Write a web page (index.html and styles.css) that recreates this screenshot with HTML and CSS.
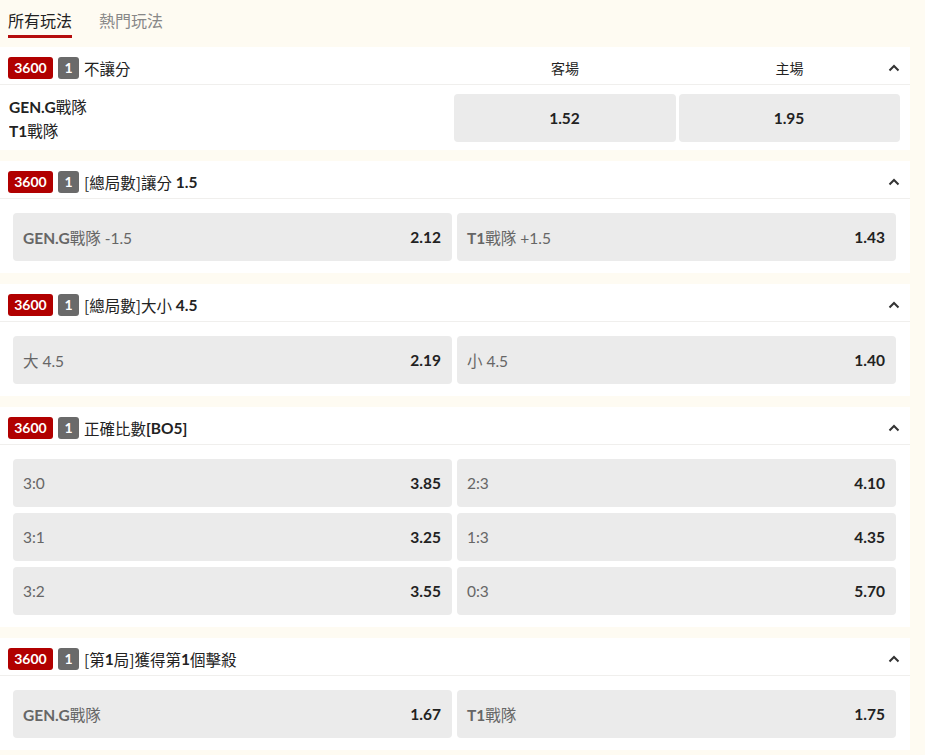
FILE: index.html
```html
<!DOCTYPE html>
<html lang="zh-Hant">
<head>
<meta charset="utf-8">
<title>玩法</title>
<link rel="stylesheet" href="styles.css">
</head>
<body>
<div class="page">
  <nav class="tabs">
    <span class="tab active">所有玩法</span>
    <span class="tab">熱門玩法</span>
  </nav>

  <section class="card">
    <header class="head head-cols">
      <div class="title"><span class="badge red">3600</span><span class="badge gray">1</span><span class="cj">不讓分</span></div>
      <div class="col-label away">客場</div>
      <div class="col-label home">主場</div>
      <svg class="chev chev-cols" width="12" height="8" viewBox="0 0 12 8"><path d="M1.5 6.5 L6 2 L10.5 6.5" fill="none" stroke="#333" stroke-width="2"/></svg>
    </header>
    <div class="body body-cols">
      <div class="teams">
        <div class="team">GEN.G<span class="cj">戰隊</span></div>
        <div class="team">T1<span class="cj">戰隊</span></div>
      </div>
      <button class="odd center"><b>1.52</b></button>
      <button class="odd center"><b>1.95</b></button>
    </div>
  </section>

  <section class="card">
    <header class="head">
      <div class="title"><span class="badge red">3600</span><span class="badge gray">1</span><span class="cj">[總局數]讓分</span>&nbsp;1.5</div>
      <svg class="chev" width="12" height="8" viewBox="0 0 12 8"><path d="M1.5 6.5 L6 2 L10.5 6.5" fill="none" stroke="#333" stroke-width="2"/></svg>
    </header>
    <div class="body grid2">
      <button class="odd"><span class="lbl"><b>GEN.G</b>戰隊 -1.5</span><b>2.12</b></button>
      <button class="odd"><span class="lbl"><b>T1</b>戰隊 +1.5</span><b>1.43</b></button>
    </div>
  </section>

  <section class="card">
    <header class="head">
      <div class="title"><span class="badge red">3600</span><span class="badge gray">1</span><span class="cj">[總局數]大小</span>&nbsp;4.5</div>
      <svg class="chev" width="12" height="8" viewBox="0 0 12 8"><path d="M1.5 6.5 L6 2 L10.5 6.5" fill="none" stroke="#333" stroke-width="2"/></svg>
    </header>
    <div class="body grid2">
      <button class="odd"><span class="lbl">大 4.5</span><b>2.19</b></button>
      <button class="odd"><span class="lbl">小 4.5</span><b>1.40</b></button>
    </div>
  </section>

  <section class="card">
    <header class="head">
      <div class="title"><span class="badge red">3600</span><span class="badge gray">1</span><span class="cj">正確比數</span>[BO5]</div>
      <svg class="chev" width="12" height="8" viewBox="0 0 12 8"><path d="M1.5 6.5 L6 2 L10.5 6.5" fill="none" stroke="#333" stroke-width="2"/></svg>
    </header>
    <div class="body grid2">
      <button class="odd"><span class="lbl">3:0</span><b>3.85</b></button>
      <button class="odd"><span class="lbl">2:3</span><b>4.10</b></button>
      <button class="odd"><span class="lbl">3:1</span><b>3.25</b></button>
      <button class="odd"><span class="lbl">1:3</span><b>4.35</b></button>
      <button class="odd"><span class="lbl">3:2</span><b>3.55</b></button>
      <button class="odd"><span class="lbl">0:3</span><b>5.70</b></button>
    </div>
  </section>

  <section class="card">
    <header class="head">
      <div class="title"><span class="badge red">3600</span><span class="badge gray">1</span><span class="cj">[第</span>1<span class="cj">局]獲得第</span>1<span class="cj">個擊殺</span></div>
      <svg class="chev" width="12" height="8" viewBox="0 0 12 8"><path d="M1.5 6.5 L6 2 L10.5 6.5" fill="none" stroke="#333" stroke-width="2"/></svg>
    </header>
    <div class="body grid2">
      <button class="odd"><span class="lbl"><b>GEN.G</b>戰隊</span><b>1.67</b></button>
      <button class="odd"><span class="lbl"><b>T1</b>戰隊</span><b>1.75</b></button>
    </div>
  </section>
</div>
</body>
</html>
```
FILE: styles.css
```css
* { box-sizing: border-box; }
html, body {
  margin: 0;
  padding: 0;
  background: #fefbf2;
}
body {
  font-family: Lato, "Noto Sans CJK TC", sans-serif;
  color: #222;
}
.page {
  width: 910px;
}
.tabs {
  display: flex;
  gap: 27px;
  height: 47px;
  padding: 10px 8px 0;
}
.tab {
  font-family: "Noto Sans CJK TC", sans-serif;
  font-size: 16px;
  line-height: 20px;
  height: 28px;
  padding: 0 0 5px;
  color: #888;
  border-bottom: 3px solid transparent;
}
.tab.active {
  color: #222;
  border-bottom-color: #b50c0c;
}
.card {
  background: #fff;
  margin-bottom: 11px;
}
.head {
  display: flex;
  align-items: center;
  height: 38px;
  padding: 10px 10px 5px 8px;
  border-bottom: 1px solid #f0efed;
}
.head-cols {
  display: grid;
  grid-template-columns: 1fr 222px 221px;
  column-gap: 3px;
  padding-left: 8px;
}
.head-cols .title { grid-row: 1; grid-column: 1; }
.head-cols .away { grid-row: 1; grid-column: 2; }
.head-cols .home { grid-row: 1; grid-column: 3; }
.title {
  display: flex;
  align-items: center;
  height: 22px;
  font-size: 15.5px;
  font-weight: 700;
  line-height: 22px;
  white-space: pre;
}
.cj {
  font-family: "Noto Sans CJK TC", sans-serif;
  font-weight: 400;
}
.badge {
  display: inline-flex;
  align-items: center;
  justify-content: center;
  height: 22px;
  border-radius: 3px;
  color: #fff;
  font-size: 14px;
  font-weight: 700;
  margin-right: 5px;
}
.badge.red {
  background: #b10000;
  width: 45px;
}
.badge.gray {
  background: #6a6a6a;
  width: 21px;
}
.col-label {
  text-align: center;
  font-family: "Noto Sans CJK TC", sans-serif;
  font-size: 14px;
  line-height: 22px;
  height: 22px;
  color: #222;
}
.chev {
  margin-left: auto;
  display: block;
}
.chev-cols {
  grid-row: 1;
  grid-column: 3;
  justify-self: end;
}
.body {
  padding: 14px 14px 12px 13px;
}
.body-cols {
  display: grid;
  grid-template-columns: 1fr 222px 221px;
  column-gap: 3px;
  align-items: center;
  padding: 9px 10px 8px 9px;
}
.teams {
  font-size: 15.5px;
  font-weight: 700;
  line-height: 24px;
}
.team {
  height: 24px;
  overflow: hidden;
}
.grid2 {
  display: grid;
  grid-template-columns: 1fr 1fr;
  column-gap: 5px;
  row-gap: 6px;
}
.odd {
  display: flex;
  align-items: center;
  justify-content: space-between;
  height: 48px;
  padding: 0 11px 0 10px;
  border: 0;
  border-radius: 4px;
  background: #ebebeb;
  font-family: Lato, "Noto Sans CJK TC", sans-serif;
  font-size: 15.5px;
  color: #222;
  text-align: left;
}
.odd.center {
  justify-content: center;
}
.odd b {
  font-weight: 700;
}
.lbl {
  color: #666;
  font-weight: 400;
}
.lbl b {
  color: #666;
}
```
